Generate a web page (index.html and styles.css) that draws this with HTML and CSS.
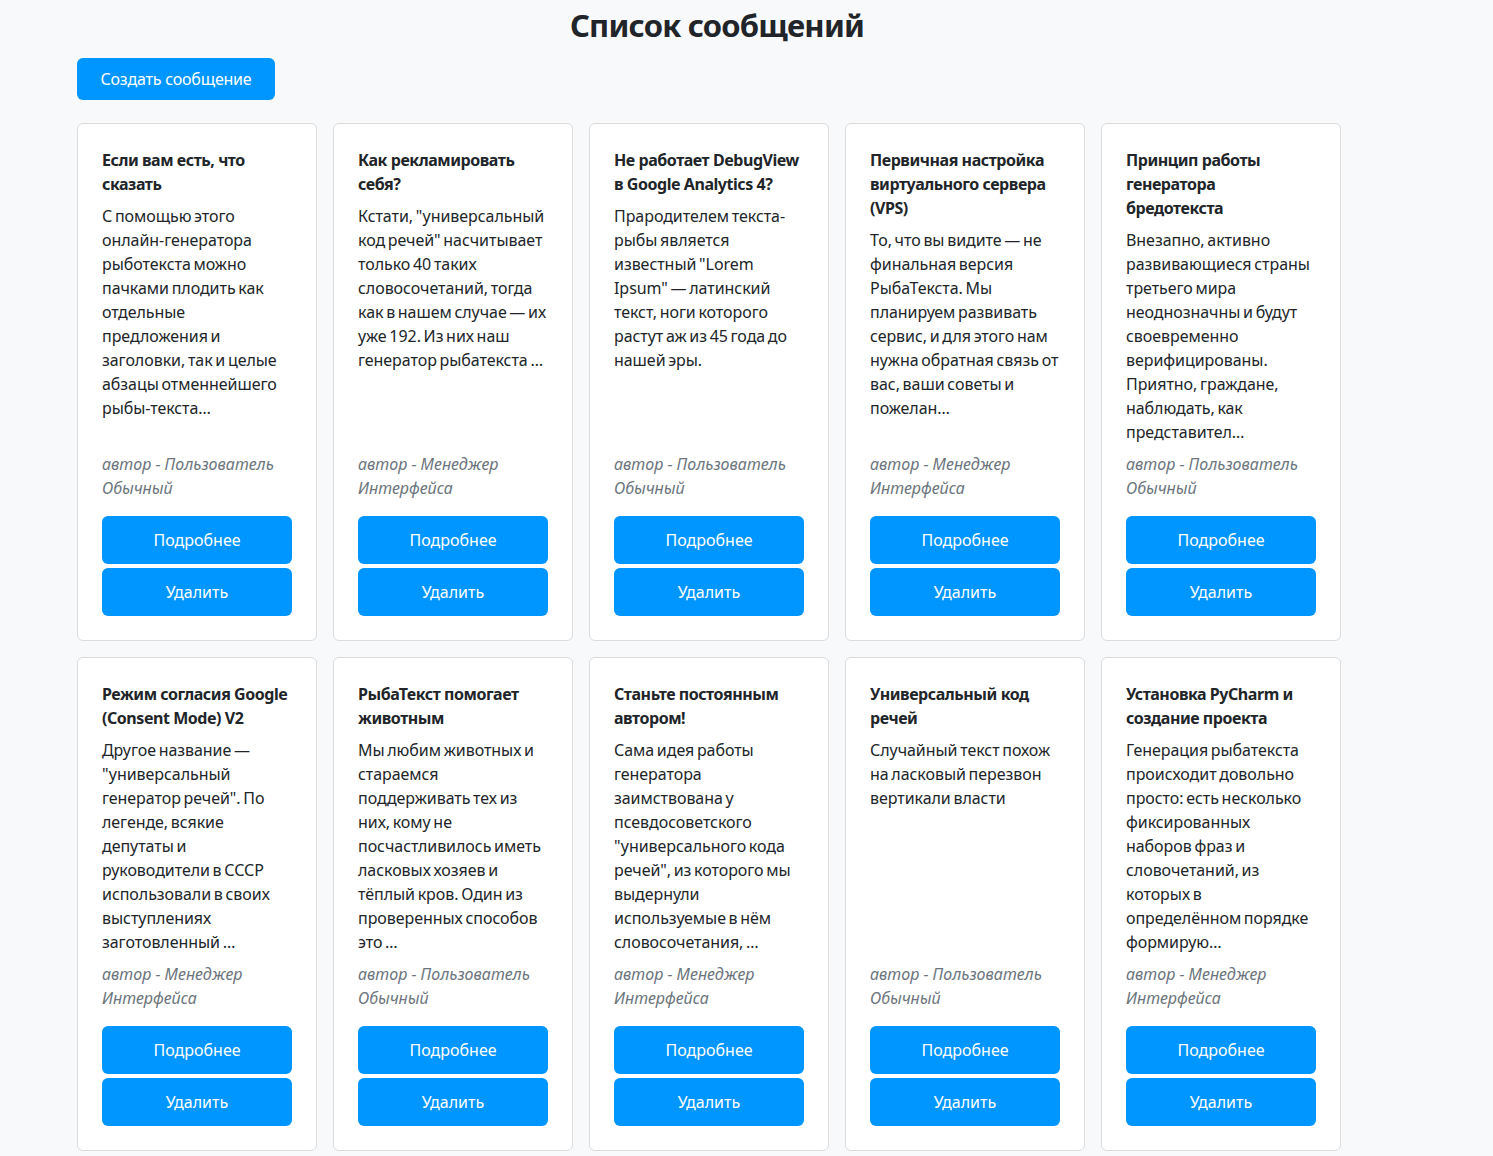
FILE: index.html
```html
<!DOCTYPE html>
<html lang="ru">
<head>
<meta charset="utf-8">
<title>Список сообщений</title>
<link rel="stylesheet" href="styles.css">
</head>
<body>
<main class="page">
  <h1 class="page-title">Список сообщений</h1>
  <a class="btn btn-create" href="#">Создать сообщение</a>
  <div class="grid">
    <article class="card">
      <h5 class="card-title">Если вам есть, что сказать</h5>
      <p class="card-text">С помощью этого онлайн-генератора рыботекста можно пачками плодить как отдельные предложения и заголовки, так и целые абзацы отменнейшего рыбы-текста…</p>
      <p class="card-author">автор - Пользователь Обычный</p>
      <a class="btn btn-block" href="#">Подробнее</a>
      <a class="btn btn-block btn-gap" href="#">Удалить</a>
    </article>
    <article class="card">
      <h5 class="card-title">Как рекламировать себя?</h5>
      <p class="card-text">Кстати, "универсальный код речей" насчитывает только 40 таких словосочетаний, тогда как в нашем случае — их уже 192. Из них наш генератор рыбатекста …</p>
      <p class="card-author">автор - Менеджер Интерфейса</p>
      <a class="btn btn-block" href="#">Подробнее</a>
      <a class="btn btn-block btn-gap" href="#">Удалить</a>
    </article>
    <article class="card">
      <h5 class="card-title">Не работает DebugView в Google Analytics 4?</h5>
      <p class="card-text">Прародителем текста-рыбы является известный "Lorem Ipsum" — латинский текст, ноги которого растут аж из 45 года до нашей эры.</p>
      <p class="card-author">автор - Пользователь Обычный</p>
      <a class="btn btn-block" href="#">Подробнее</a>
      <a class="btn btn-block btn-gap" href="#">Удалить</a>
    </article>
    <article class="card">
      <h5 class="card-title">Первичная настройка виртуального сервера (VPS)</h5>
      <p class="card-text">То, что вы видите — не финальная версия РыбаТекста. Мы планируем развивать сервис, и для этого нам нужна обратная связь от вас, ваши советы и пожелан…</p>
      <p class="card-author">автор - Менеджер Интерфейса</p>
      <a class="btn btn-block" href="#">Подробнее</a>
      <a class="btn btn-block btn-gap" href="#">Удалить</a>
    </article>
    <article class="card">
      <h5 class="card-title">Принцип работы генератора бредотекста</h5>
      <p class="card-text">Внезапно, активно развивающиеся страны третьего мира неоднозначны и будут своевременно верифицированы. Приятно, граждане, наблюдать, как представител…</p>
      <p class="card-author">автор - Пользователь Обычный</p>
      <a class="btn btn-block" href="#">Подробнее</a>
      <a class="btn btn-block btn-gap" href="#">Удалить</a>
    </article>
    <article class="card">
      <h5 class="card-title">Режим согласия Google (Consent Mode) V2</h5>
      <p class="card-text">Другое название — "универсальный генератор речей". По легенде, всякие депутаты и руководители в СССР использовали в своих выступлениях заготовленный …</p>
      <p class="card-author">автор - Менеджер Интерфейса</p>
      <a class="btn btn-block" href="#">Подробнее</a>
      <a class="btn btn-block btn-gap" href="#">Удалить</a>
    </article>
    <article class="card">
      <h5 class="card-title">РыбаТекст помогает животным</h5>
      <p class="card-text">Мы любим животных и стараемся поддерживать тех из них, кому не посчастливилось иметь ласковых хозяев и тёплый кров. Один из проверенных способов это …</p>
      <p class="card-author">автор - Пользователь Обычный</p>
      <a class="btn btn-block" href="#">Подробнее</a>
      <a class="btn btn-block btn-gap" href="#">Удалить</a>
    </article>
    <article class="card">
      <h5 class="card-title">Станьте постоянным автором!</h5>
      <p class="card-text">Сама идея работы генератора заимствована у псевдосоветского "универсального кода речей", из которого мы выдернули используемые в нём словосочетания, …</p>
      <p class="card-author">автор - Менеджер Интерфейса</p>
      <a class="btn btn-block" href="#">Подробнее</a>
      <a class="btn btn-block btn-gap" href="#">Удалить</a>
    </article>
    <article class="card">
      <h5 class="card-title">Универсальный код речей</h5>
      <p class="card-text">Случайный текст похож на ласковый перезвон вертикали власти</p>
      <p class="card-author">автор - Пользователь Обычный</p>
      <a class="btn btn-block" href="#">Подробнее</a>
      <a class="btn btn-block btn-gap" href="#">Удалить</a>
    </article>
    <article class="card">
      <h5 class="card-title">Установка PyCharm и создание проекта</h5>
      <p class="card-text">Генерация рыбатекста происходит довольно просто: есть несколько фиксированных наборов фраз и словочетаний, из которых в определённом порядке формирую…</p>
      <p class="card-author">автор - Менеджер Интерфейса</p>
      <a class="btn btn-block" href="#">Подробнее</a>
      <a class="btn btn-block btn-gap" href="#">Удалить</a>
    </article>
  </div>
</main>
</body>
</html>
```
FILE: styles.css
```css
* { box-sizing: border-box; }
html, body { margin: 0; padding: 0; }
body {
  background: #f8f9fa;
  color: #212529;
  font-family: "Noto Sans", "Open Sans", "DejaVu Sans", sans-serif;
  font-size: 16px;
  line-height: 24px;
}
.page {
  width: 1280px;
  margin-left: 77px;
  display: flex;
  flex-direction: column;
  align-items: flex-start;
}
.page-title {
  align-self: stretch;
  text-align: center;
  font-size: 31px;
  letter-spacing: -0.8px;
  line-height: 40px;
  font-weight: 700;
  margin: 5px 0 13px;
}
.btn {
  display: flex;
  align-items: center;
  justify-content: center;
  background: #0096ff;
  color: #fff;
  text-decoration: none;
  border-radius: 6px;
  font-size: 16px;
}
.btn-create {
  width: 198px;
  height: 42px;
  margin-bottom: 23px;
  letter-spacing: -0.2px;
}
.grid {
  display: grid;
  grid-template-columns: repeat(5, 240px);
  gap: 16px;
}
.card {
  display: flex;
  flex-direction: column;
  background: #fff;
  border: 1px solid #dcdcdc;
  border-radius: 6px;
  padding: 24px;
}
.card-title {
  margin: 0 0 8px;
  font-size: 16px;
  font-weight: 700;
  line-height: 24px;
  letter-spacing: -0.45px;
}
.card-text {
  margin: 0 0 8px;
  letter-spacing: -0.05px;
  word-spacing: -1.4px;
}
.card-author {
  margin: auto 0 16px;
  font-style: italic;
  color: #6c757d;
}
.btn-block {
  height: 48px;
}
.btn-gap {
  margin-top: 4px;
}
```
